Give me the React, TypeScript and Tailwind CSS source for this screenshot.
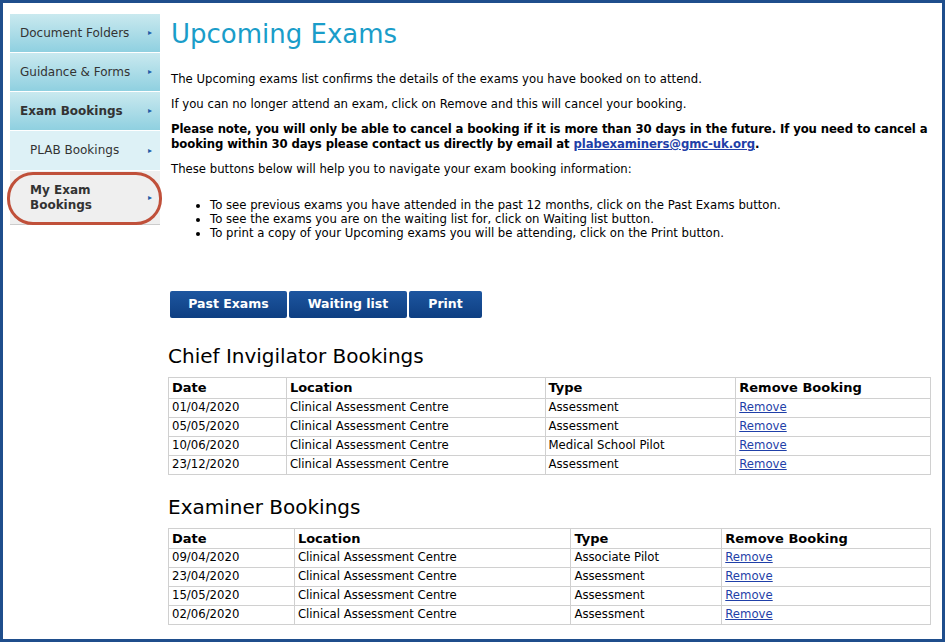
const font = { fontFamily: '"DejaVu Sans", Verdana, sans-serif' };

const chief = [
  ['01/04/2020', 'Clinical Assessment Centre', 'Assessment'],
  ['05/05/2020', 'Clinical Assessment Centre', 'Assessment'],
  ['10/06/2020', 'Clinical Assessment Centre', 'Medical School Pilot'],
  ['23/12/2020', 'Clinical Assessment Centre', 'Assessment'],
];
const examiner = [
  ['09/04/2020', 'Clinical Assessment Centre', 'Associate Pilot'],
  ['23/04/2020', 'Clinical Assessment Centre', 'Assessment'],
  ['15/05/2020', 'Clinical Assessment Centre', 'Assessment'],
  ['02/06/2020', 'Clinical Assessment Centre', 'Assessment'],
];

function Nav({ label, bold, sub }: { label: string; bold?: boolean; sub?: boolean }) {
  const bg = sub ? 'bg-[#ddf1f6]' : 'bg-gradient-to-b from-[#c9e9ef] to-[#8fd0e0]';
  return (
    <div className={`${bg} flex items-center justify-between border-b border-white pr-2 ${sub ? 'pl-[20px] h-[40px]' : 'pl-[10px] h-[39px]'}`}>
      <span className={`text-[12px] text-[#333] ${bold ? 'font-bold' : ''} leading-[15px]`}>{label}</span>
      <span className="text-[8px] text-[#1f5ea8]">▸</span>
    </div>
  );
}

function Table({ rows, cols }: { rows: string[][]; cols: string[] }) {
  return (
    <table className="w-[763px] border-collapse border border-[#ccc] text-[11.7px] text-black">
      <colgroup>{cols.map((w, i) => <col key={i} style={{ width: w }} />)}</colgroup>
      <thead>
        <tr className="h-[19px]">
          {['Date', 'Location', 'Type', 'Remove Booking'].map(h => (
            <th key={h} className="border border-[#d0d0d0] text-left font-bold text-[13px] px-[3px] py-0">{h}</th>
          ))}
        </tr>
      </thead>
      <tbody>
        {rows.map(r => (
          <tr key={r[0]} className="h-[19px]">
            {r.map((c, i) => <td key={i} className="border border-[#d0d0d0] px-[3px] py-0">{c}</td>)}
            <td className="border border-[#d0d0d0] px-[3px] py-0"><a className="text-[#1f3fa8] underline">Remove</a></td>
          </tr>
        ))}
      </tbody>
    </table>
  );
}

export default function App() {
  return (
    <div style={font} className="w-[945px] h-[642px] bg-white border-[3px] border-[#1f4e8c] flex">
      <div className="w-[150px] ml-[7px] mt-[11px] flex flex-col shrink-0">
        <Nav label="Document Folders" />
        <Nav label="Guidance & Forms" />
        <Nav label="Exam Bookings" bold />
        <Nav label="PLAB Bookings" sub />
        <div className="relative">
          <div className="h-[54px] bg-[#efefef] flex items-center justify-between pl-[20px] pr-2 border-b border-[#ccc]">
            <span className="text-[12px] font-bold text-[#333] leading-[15px]">My Exam<br />Bookings</span>
            <span className="text-[8px] text-[#1f5ea8]">▸</span>
          </div>
          <div className="absolute left-[-3px] top-[1px] w-[155px] h-[53px] rounded-[26px] border-[3px] border-[#c0503a]" />
        </div>
      </div>
      <div className="ml-[11px] flex-1 pr-[8px]">
        <h1 className="text-[26px] text-[#1a9dc9] mt-[15px] leading-[32px]">Upcoming Exams</h1>
        <div className="text-[11.7px] text-black mt-[22px] leading-[15px] flex flex-col gap-[10px] pr-1">
          <p>The Upcoming exams list confirms the details of the exams you have booked on to attend.</p>
          <p>If you can no longer attend an exam, click on Remove and this will cancel your booking.</p>
          <p className="font-bold tracking-[-0.1px]">Please note, you will only be able to cancel a booking if it is more than 30 days in the future. If you need to cancel a booking within 30 days please contact us directly by email at <a className="text-[#1f3fa8] underline">plabexaminers@gmc-uk.org</a>.</p>
          <p>These buttons below will help you to navigate your exam booking information:</p>
        </div>
        <ul className="list-disc text-[11.7px] leading-[14px] mt-[21px] ml-[39px]">
          <li>To see previous exams you have attended in the past 12 months, click on the Past Exams button.</li>
          <li>To see the exams you are on the waiting list for, click on Waiting list button.</li>
          <li>To print a copy of your Upcoming exams you will be attending, click on the Print button.</li>
        </ul>
        <div className="flex gap-[2px] mt-[51px] ml-[-1px]">
          {[['Past Exams', 'w-[117px]'], ['Waiting list', 'w-[118px]'], ['Print', 'w-[73px]']].map(([b, w]) => (
            <button key={b} className={`${w} h-[27px] bg-gradient-to-b from-[#1d56a0] to-[#0e3f82] text-white font-bold text-[12.5px] rounded-[2px]`}>{b}</button>
          ))}
        </div>
        <h2 className="text-[20px] mt-[25px] mb-[8px] ml-[-3px] leading-[26px]">Chief Invigilator Bookings</h2>
        <div className="ml-[-3px]"><Table rows={chief} cols={['118px', '259px', '191px', '195px']} /></div>
        <h2 className="text-[20px] mt-[19px] mb-[8px] ml-[-3px] leading-[26px]">Examiner Bookings</h2>
        <div className="ml-[-3px]"><Table rows={examiner} cols={['126px', '277px', '151px', '209px']} /></div>
      </div>
    </div>
  );
}
